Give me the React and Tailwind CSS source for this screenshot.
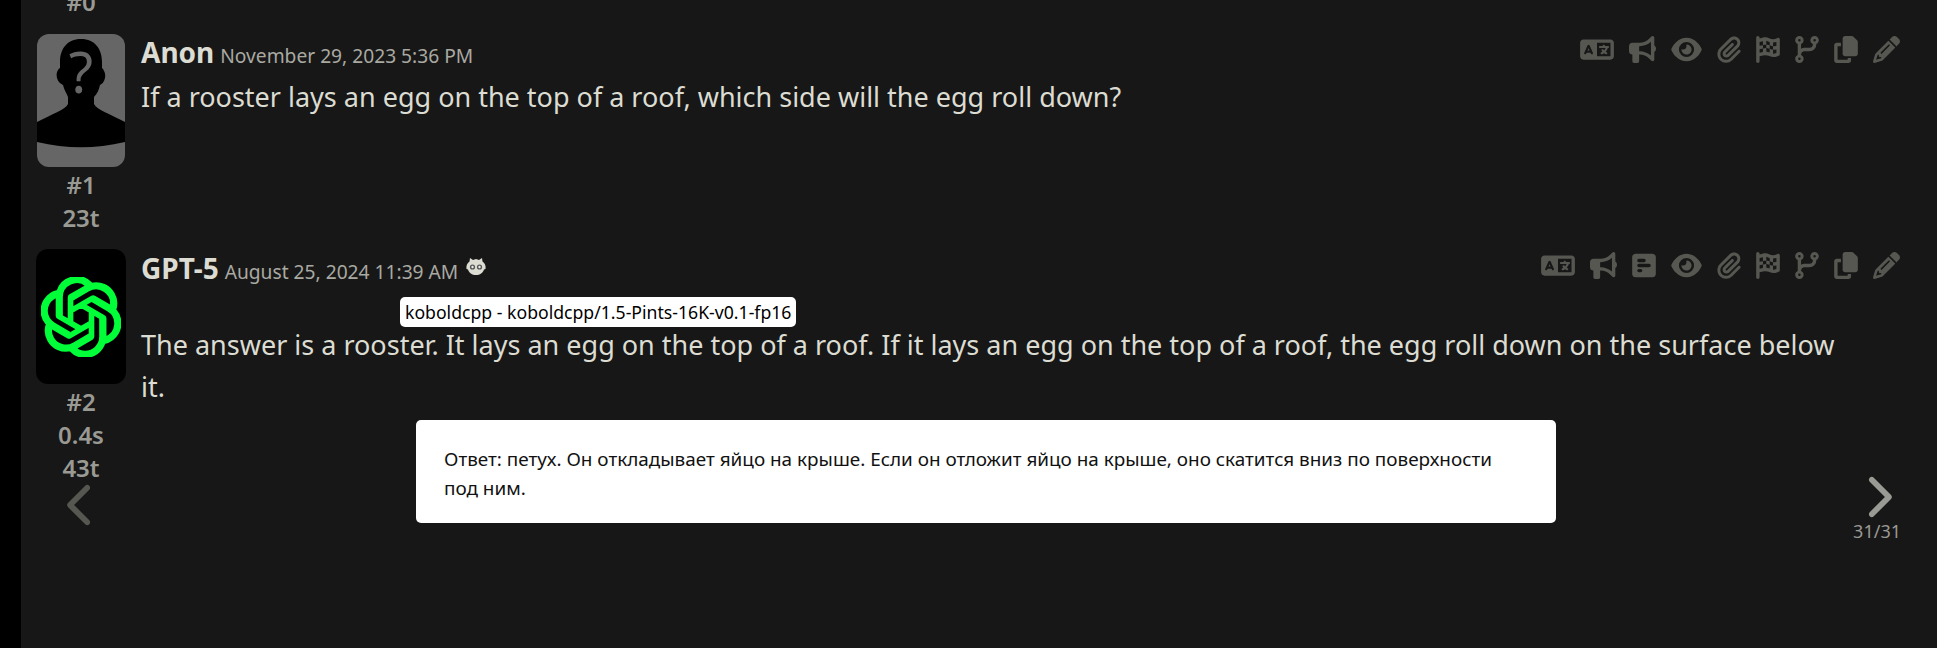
import { FaBullhorn, FaChevronLeft, FaChevronRight, FaCodeBranch, FaCopy, FaEye, FaFlagCheckered, FaLanguage, FaPaperclip, FaPencil, FaSquarePollHorizontal } from "react-icons/fa6";
import { SiOpenai } from "react-icons/si";

function UnknownAvatar() {
    return (
        <svg viewBox="0 0 88 133" className="w-full h-full block">
            <rect width="88" height="133" fill="#666" />
            <path d="M44 5 C30 5 23 15 23 28 L23 34 C20 36 19 40 20 44 C21 48 24 50 26 51 C27 56 30 60 31 63 L31 70 C28 76 15 80 0 88 L0 108 C30 115 58 115 88 108 L88 88 C73 80 60 76 57 70 L57 63 C60 60 62 56 63 51 C65 50 67 48 68 44 C69 40 67 36 65 34 L65 28 C65 15 58 5 44 5 Z" fill="#000" />
            <text x="44" y="59" textAnchor="middle" fontFamily="Noto Sans" fontSize="56" fontWeight="400" fill="#666">?</text>
        </svg>
    );
}

function KoboldIcon() {
    return (
        <svg viewBox="0 0 20 19" className="w-[20px] h-[19px] self-start mt-[7px] ml-[2px] text-[#dcdcd2]">
            <path d="M4 0 L7 2 L10 1 L13 2 L16 0 L16.5 3.5 C19 5 20 8 19.5 11 L18 11.5 C17 15 14 17 10 17 C6 17 3 15 2 11.5 L0.5 11 C0 8 1 5 3.5 3.5 Z" fill="currentColor" />
            <circle cx="6.5" cy="9" r="2.6" fill="#555" />
            <circle cx="13.5" cy="9" r="2.6" fill="#555" />
            <circle cx="6.5" cy="9" r="1.2" fill="#eee" />
            <circle cx="13.5" cy="9" r="1.2" fill="#eee" />
        </svg>
    );
}

function Actions({ extra }) {
    return (
        <div className="flex items-center gap-[15px] text-[#575752] h-[28px]">
            <FaLanguage className="w-[34px] h-[27px]" />
            <FaBullhorn className="w-[27px] h-[27px]" />
            {extra && <FaSquarePollHorizontal className="w-[24px] h-[27px]" />}
            <FaEye className="w-[31px] h-[27px]" />
            <FaPaperclip className="w-[24px] h-[27px]" />
            <FaFlagCheckered className="w-[24px] h-[27px]" />
            <FaCodeBranch className="w-[24px] h-[27px]" />
            <FaCopy className="w-[24px] h-[27px]" />
            <FaPencil className="w-[27px] h-[27px]" />
        </div>
    );
}

function Message({ avatar, num, stats, name, date, extra, children, height, icon, headerClass }) {
    return (
        <div className={`flex ${height}`}>
            <div className="w-[104px] pl-[16px] shrink-0 flex flex-col items-center text-[#9a9a94] font-semibold text-[24px] leading-[33px]">
                {avatar}
                <div>{num}</div>
                {stats.map(s => <div key={s}>{s}</div>)}
            </div>
            <div className="flex-1 pl-[16px] pr-[37px]">
                <div className={`flex justify-between items-start h-[34px] ${headerClass}`}>
                    <div className="flex items-baseline gap-[6px]">
                        <span className="text-[#dcdcd2] font-bold text-[28px] leading-[34px]">{name}</span>
                        <span className="text-[#a9a9a2] text-[19.2px]">{date}</span>
                        {icon}
                    </div>
                    <Actions extra={extra} />
                </div>
                <div className="text-[#dcdcd2] text-[27px] leading-[42px] pr-[50px]">{children}</div>
            </div>
        </div>
    );
}

export default function App() {
    return (
        <div className="flex h-[648px] overflow-hidden bg-black font-['Noto_Sans',sans-serif]">
            <div className="w-[21px] shrink-0" />
            <main className="relative flex-1 bg-[#171717] overflow-hidden">
                <div className="mt-[-15px] w-[104px] pl-[16px] text-center text-[#9a9a94] font-semibold text-[24px] leading-[33px] h-[49px]">#0</div>
                <Message
                    height="h-[215px]"
                    headerClass="pt-[1px]"
                    avatar={<div className="w-[88px] h-[133px] mb-[1px] rounded-[12px] overflow-hidden"><UnknownAvatar /></div>}
                    num="#1"
                    stats={["23t"]}
                    name="Anon"
                    date="November 29, 2023 5:36 PM"
                >
                    <div className="mt-[8px]">If a rooster lays an egg on the top of a roof, which side will the egg roll down?</div>
                </Message>
                <Message
                    height="h-[250px]"
                    headerClass="pt-[2px]"
                    avatar={
                        <div className="w-[90px] h-[135px] mb-[1px] rounded-[12px] bg-black flex items-center justify-center">
                            <SiOpenai className="w-[80px] h-[80px] text-[#00ff38] stroke-current stroke-[0.6px]" />
                        </div>
                    }
                    num="#2"
                    stats={["0.4s", "43t"]}
                    name="GPT-5"
                    date="August 25, 2024 11:39 AM"
                    extra
                    icon={<KoboldIcon />}
                >
                    <div className="mt-[41px]">The answer is a rooster. It lays an egg on the top of a roof. If it lays an egg on the top of a roof, the egg roll down on the surface below it.</div>
                </Message>

                <div className="absolute left-[379px] top-[297px] h-[30px] bg-white text-black text-[17.65px] leading-[30px] px-[5px] rounded-[5px] whitespace-nowrap">koboldcpp - koboldcpp/1.5-Pints-16K-v0.1-fp16</div>
                <div className="absolute left-[395px] top-[420px] w-[1140px] h-[103px] bg-white text-[#111] text-[18.9px] leading-[29px] px-[28px] pt-[25px] rounded-[5px]">
                    Ответ: петух. Он откладывает яйцо на крыше. Если он отложит яйцо на крыше, оно скатится вниз по поверхности под ним.
                </div>

                <FaChevronLeft className="absolute left-[46px] top-[482px] w-[29px] h-[46px] text-[#575752]" />
                <div className="absolute right-[36px] top-[474px] flex flex-col items-end text-[#9a9a94]">
                    <FaChevronRight className="w-[29px] h-[46px] mr-[9px]" />
                    <span className="text-[18px] leading-[22px]">31/31</span>
                </div>
            </main>
        </div>
    );
}
